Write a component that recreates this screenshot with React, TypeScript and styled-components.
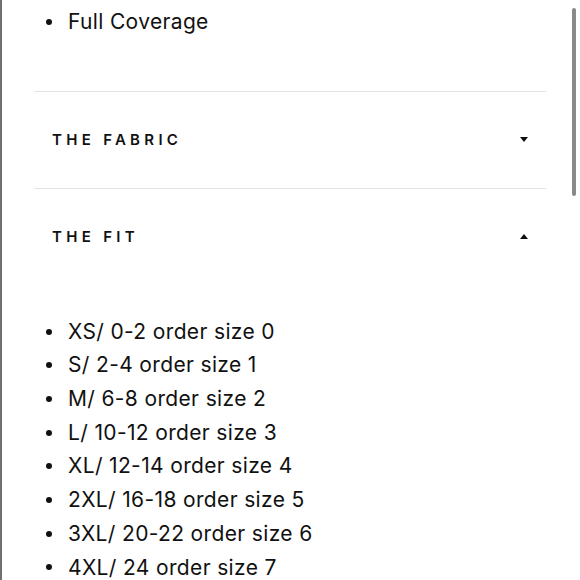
import React from "react";
import styled, { createGlobalStyle } from "styled-components";

const Global = createGlobalStyle`
  html, body { margin: 0; padding: 0; background: #fff; }
  body { font-family: Inter, "Noto Sans", sans-serif; color: #111; overflow: hidden; }
`;

const Page = styled.div`
  position: relative;
  width: 580px;
  height: 580px;
  overflow: hidden;
  border-left: 2px solid #707070;
  box-sizing: border-box;
`;

const Content = styled.div`
  padding: 0 34px 0 32px;
  margin-top: 5px;
`;

const BulletList = styled.ul<{ $top?: number; $bottom?: number }>`
  list-style: none;
  margin: 0;
  padding: ${(p) => p.$top ?? 0}px 0 ${(p) => p.$bottom ?? 0}px 0;
`;

const Item = styled.li`
  display: flex;
  align-items: center;
  font-size: 21px;
  letter-spacing: 0.35px;
  line-height: 33.7px;
  height: 33.7px;
  color: #111;
  &::before {
    content: "";
    width: 6px;
    height: 6px;
    border-radius: 50%;
    background: #111;
    margin: 0 16px 0 12px;
    flex: none;
  }
`;

const Section = styled.div`
  border-top: 1px solid #e2e2e2;
`;

const Header = styled.div`
  height: 96px;
  display: flex;
  align-items: center;
  justify-content: space-between;
  padding: 0 18px;
`;

const Title = styled.span`
  font-family: Inter, "Noto Sans", sans-serif;
  font-size: 15px;
  font-weight: 600;
  letter-spacing: 4.3px;
  color: #111;
`;

const Caret = styled.span<{ $up?: boolean }>`
  width: 0;
  height: 0;
  border-left: 4.5px solid transparent;
  border-right: 4.5px solid transparent;
  ${(p) => (p.$up ? "border-bottom: 5px solid #111;" : "border-top: 5px solid #111;")}
`;

const Scrollbar = styled.div`
  position: absolute;
  right: 4px;
  top: 8px;
  width: 4px;
  height: 188px;
  border-radius: 2px;
  background: #8a8a8a;
`;

const sizes = [
  "XS/ 0-2 order size 0",
  "S/ 2-4 order size 1",
  "M/ 6-8 order size 2",
  "L/ 10-12 order size 3",
  "XL/ 12-14 order size 4",
  "2XL/ 16-18 order size 5",
  "3XL/ 20-22 order size 6",
  "4XL/ 24 order size 7",
];

export default function App() {
  return (
    <Page>
      <Global />
      <Content>
        <BulletList $bottom={52}>
          <Item>Full Coverage</Item>
        </BulletList>
        <Section>
          <Header>
            <Title>THE FABRIC</Title>
            <Caret />
          </Header>
        </Section>
        <Section>
          <Header>
            <Title>THE FIT</Title>
            <Caret $up />
          </Header>
          <BulletList $top={30}>
            {sizes.map((s) => (
              <Item key={s}>{s}</Item>
            ))}
          </BulletList>
        </Section>
      </Content>
      <Scrollbar />
    </Page>
  );
}
